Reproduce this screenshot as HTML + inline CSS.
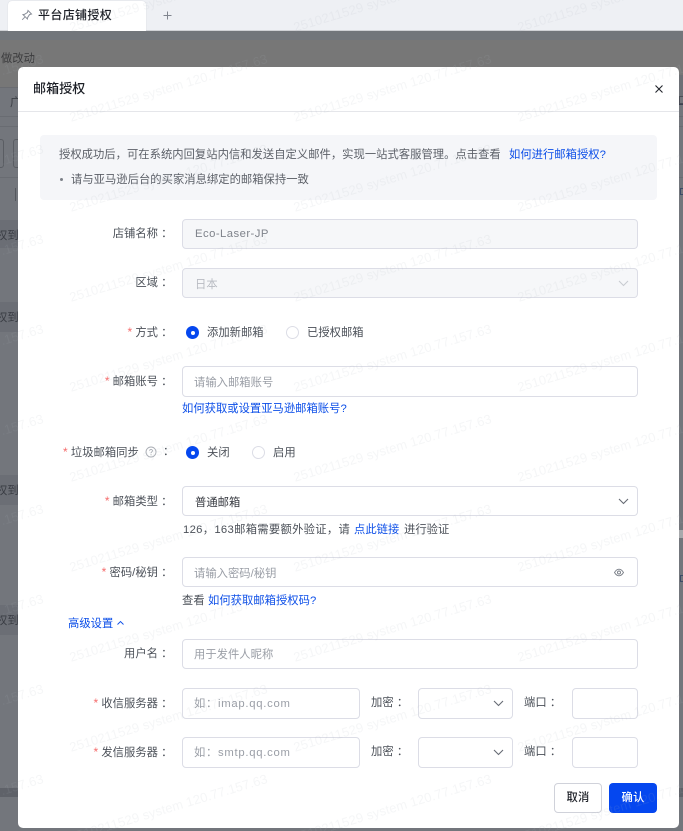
<!DOCTYPE html>
<html lang="zh" style="width:683px;height:831px;overflow:hidden"><head><meta charset="utf-8"><title>邮箱授权</title>
<style>
*{box-sizing:border-box}
html,body{margin:0;padding:0}
body{width:683px;height:831px;overflow:hidden;position:relative;background:#73767c;font-family:"Liberation Sans","Noto Sans CJK SC",sans-serif;font-size:11.3px;letter-spacing:.03px;color:#4b5058}
.a{position:absolute;white-space:nowrap;line-height:16px}
.r{position:absolute;white-space:nowrap;line-height:16px;text-align:right}
.i{position:absolute;border:1px solid #dcdde6;border-radius:4px;background:#fff;height:30px}
.d{background:#f6f7f9}
.ph{color:#9a9ea6}
.b{color:#0d4fe8}
.s{color:#f56c6c;font-size:12px}
.rd{position:absolute;width:13px;height:13px;border-radius:50%;background:#0547ef}
.rd:after{content:"";position:absolute;left:4.5px;top:4.5px;width:4px;height:4px;border-radius:50%;background:#fff}
.ro{position:absolute;width:13px;height:13px;border-radius:50%;background:#fff;border:1px solid #dcdde6}
svg{position:absolute;overflow:visible}
.bd{position:absolute;left:0;width:18px;height:30px;background:#6b6e75}
.wm{position:absolute;white-space:nowrap;font-size:13px;letter-spacing:.1px;line-height:16px;color:rgba(175,180,190,.12);transform-origin:0 50%;transform:rotate(-16.7deg);pointer-events:none;z-index:50}
#wmwrap{position:absolute;left:0;top:0;width:683px;height:831px;overflow:hidden;z-index:50}
</style></head><body>

<!-- top bar -->
<div style="position:absolute;left:0;top:0;width:683px;height:31px;background:#eef0f4;border-bottom:1px solid #d0d2d6"></div>
<div style="position:absolute;left:8px;top:1px;width:138px;height:30px;background:#fff;border-radius:4px 4px 0 0;box-shadow:0 0 1px #c8ccd2"></div>
<svg style="left:21px;top:9px" width="12" height="12" viewBox="0 0 12 12" fill="none" stroke="#8a8f99" stroke-width="1"><path d="M7 1.5 10.5 5 8.5 5.6 6.6 8.6 6.4 10 2 5.6 3.4 5.4 6.400 3.500Z"/><path d="M3.800 8.200 1.200 10.800"/></svg>
<div class="a" style="left:38px;top:7px;font-size:12px;letter-spacing:.35px;color:#1c1f26;font-weight:500">平台店铺授权</div>
<svg style="left:162px;top:10px" width="11" height="11" viewBox="0 0 11 11" stroke="#80858e" stroke-width="1"><path d="M5.500 1.500v8M1.500 5.500h8"/></svg>

<!-- background page under mask -->
<div style="position:absolute;left:0;top:31px;width:683px;height:9px;background:#72767b"></div>
<div style="position:absolute;left:0;top:40px;width:683px;height:47px;background:#777"></div>
<div style="position:absolute;left:0;top:87px;width:683px;height:1px;background:#6a6c71"></div>
<div style="position:absolute;left:0;top:116px;width:683px;height:1px;background:#696c72"></div>
<div style="position:absolute;left:0;top:126px;width:683px;height:1px;background:#696c72"></div>
<div style="position:absolute;left:0;top:177px;width:683px;height:1px;background:#696c72"></div>
<div class="a" style="left:1px;top:51px;color:#3c3c3e">做改动</div>
<div class="a" style="left:10px;top:95px;color:#3c3f45">广</div>
<div style="position:absolute;left:-8px;top:139px;width:12px;height:29px;border:1px solid #5a5d63;border-radius:3px"></div>
<div style="position:absolute;left:13px;top:139px;width:12px;height:29px;border:1px solid #5a5d63;border-radius:3px"></div>
<div style="position:absolute;left:15px;top:188px;width:1px;height:13px;background:#55585e"></div>
<div class="bd" style="top:220px;height:28px"></div>
<div class="bd" style="top:302px"></div>
<div class="bd" style="top:475px"></div>
<div class="bd" style="top:605px"></div>
<div style="position:absolute;left:0;top:788px;width:683px;height:9px;background:#5f6269"></div>
<div style="position:absolute;left:0;top:228px;width:18px;height:16px;overflow:hidden"><div class="a" style="left:-4px;top:0;color:#3a3d44">权到期</div></div>
<div style="position:absolute;left:0;top:310px;width:18px;height:16px;overflow:hidden"><div class="a" style="left:-4px;top:0;color:#3a3d44">权到期</div></div>
<div style="position:absolute;left:0;top:483px;width:18px;height:16px;overflow:hidden"><div class="a" style="left:-4px;top:0;color:#3a3d44">权到期</div></div>
<div style="position:absolute;left:0;top:613px;width:18px;height:16px;overflow:hidden"><div class="a" style="left:-4px;top:0;color:#3a3d44">权到期</div></div>
<div style="position:absolute;left:679px;top:75px;width:4px;height:22px;background:#6d7076"></div>
<div style="position:absolute;left:679px;top:104px;width:4px;height:1px;background:#3c4050"></div>
<div style="position:absolute;left:679px;top:96px;width:4px;height:8px;border:1px solid #4a4d55;border-right:0"></div>
<div style="position:absolute;left:680px;top:188px;width:3px;height:7px;border:1px solid #3b4a66;border-right:0"></div>
<div style="position:absolute;left:679px;top:530px;width:4px;height:8px;background:#a7a9ac"></div>
<div style="position:absolute;left:680px;top:575px;width:3px;height:7px;border:1px solid #3b4a66;border-right:0"></div>

<!-- modal -->
<div style="position:absolute;left:18px;top:67px;width:661px;height:761px;background:#fff;border-radius:5px"></div>
<div style="position:absolute;left:18px;top:111px;width:661px;height:1px;background:#e5e6ea"></div>
<div class="a" style="left:33px;top:81px;font-size:13px;letter-spacing:.1px;color:#1c1f26;font-weight:500">邮箱授权</div>
<svg style="left:655px;top:85px" width="8" height="8" viewBox="0 0 8 8" stroke="#23262d" stroke-width="1.1"><path d="M.5.5l7 7M7.500.5l-7 7"/></svg>

<!-- info -->
<div style="position:absolute;left:40px;top:135px;width:617px;height:65px;background:#f5f6f9;border-radius:4px"></div>
<div class="a" style="left:59px;top:147px;color:#5c6068">授权成功后，可在系统内回复站内信和发送自定义邮件，实现一站式客服管理。点击查看</div>
<div class="a b" style="left:509px;top:147px">如何进行邮箱授权?</div>
<div style="position:absolute;left:60px;top:178px;width:3px;height:3px;border-radius:50%;background:#7c8088"></div>
<div class="a" style="left:71px;top:172px;color:#5c6068">请与亚马逊后台的买家消息绑定的邮箱保持一致</div>

<!-- 店铺名称 -->
<div class="r" style="right:510.500px;top:226px">店铺名称 ：</div>
<div class="i d" style="left:182px;top:219px;width:456px"></div>
<div class="a" style="left:195px;top:226px;color:#7f838b;letter-spacing:.45px">Eco-Laser-JP</div>

<!-- 区域 -->
<div class="r" style="right:510.500px;top:275px">区域 ：</div>
<div class="i d" style="left:182px;top:268px;width:456px"></div>
<div class="a" style="left:195px;top:277px;color:#b9bcc3">日本</div>
<svg style="left:618px;top:280px" width="11" height="7" viewBox="0 0 11 7" fill="none" stroke="#c9cbd1" stroke-width="1.1"><path d="M1 1l4.500 4.500L10 1"/></svg>

<!-- 方式 -->
<div class="r" style="right:510.500px;top:324px"><span class="s">*</span> 方式 ：</div>
<div class="rd" style="left:186px;top:326px"></div>
<div class="a" style="left:207px;top:325px">添加新邮箱</div>
<div class="ro" style="left:286px;top:326px"></div>
<div class="a" style="left:307px;top:325px">已授权邮箱</div>

<!-- 邮箱账号 -->
<div class="r" style="right:510.500px;top:373px"><span class="s">*</span> 邮箱账号 ：</div>
<div class="i" style="left:182px;top:366px;width:456px;height:31px"></div>
<div class="a ph" style="left:194px;top:375px">请输入邮箱账号</div>
<div class="a b" style="left:182px;top:401px;letter-spacing:.02px">如何获取或设置亚马逊邮箱账号?</div>

<!-- 垃圾邮箱同步 -->
<div class="a" style="left:63px;top:444px"><span class="s">*</span> 垃圾邮箱同步</div>
<svg style="left:145px;top:446px" width="12" height="12" viewBox="0 0 12 12" fill="none" stroke="#a9adb4" stroke-width=".9"><circle cx="6" cy="6" r="5"/><path d="M4.600 4.800c0-1.800 2.900-1.800 2.900 0 0 1.100-1.500 1-1.500 2.300"/><path d="M6 8.300v.9"/></svg>
<div class="a" style="left:163px;top:444px">：</div>
<div class="rd" style="left:186px;top:446px"></div>
<div class="a" style="left:207px;top:445px">关闭</div>
<div class="ro" style="left:252px;top:446px"></div>
<div class="a" style="left:273px;top:445px">启用</div>

<!-- 邮箱类型 -->
<div class="r" style="right:510.500px;top:493px"><span class="s">*</span> 邮箱类型 ：</div>
<div class="i" style="left:182px;top:486px;width:456px"></div>
<div class="a" style="left:195px;top:495px;color:#34373e">普通邮箱</div>
<svg style="left:618px;top:498px" width="11" height="7" viewBox="0 0 11 7" fill="none" stroke="#666b74" stroke-width="1.1"><path d="M1 1l4.500 4.500L10 1"/></svg>
<div class="a" style="left:183px;top:522px;letter-spacing:.3px">126，163邮箱需要额外验证，请</div>
<div class="a b" style="left:354px;top:522px">点此链接</div>
<div class="a" style="left:404px;top:522px">进行验证</div>

<!-- 密码 -->
<div class="r" style="right:510.500px;top:564px"><span class="s">*</span> 密码/秘钥 ：</div>
<div class="i" style="left:182px;top:557px;width:456px"></div>
<div class="a ph" style="left:194px;top:566px">请输入密码/秘钥</div>
<svg style="left:614px;top:568px" width="10" height="9" viewBox="0 0 10 9" fill="none" stroke="#777c85" stroke-width=".9"><path d="M.5 4.500C2 2 3.500 1.200 5 1.200S8 2 9.500 4.500C8 7 6.500 7.800 5 7.800S2 7 .5 4.500Z"/><circle cx="5" cy="4.500" r="1.500"/></svg>
<div class="a" style="left:182px;top:593px">查看</div>
<div class="a b" style="left:208px;top:593px">如何获取邮箱授权码?</div>

<!-- 高级设置 -->
<div class="a b" style="left:68px;top:616px">高级设置</div>
<svg style="left:117px;top:621px" width="7" height="4" viewBox="0 0 7 4" fill="none" stroke="#0d4fe8" stroke-width=".9"><path d="M.5 3.500l3-3 3 3"/></svg>

<!-- 用户名 -->
<div class="r" style="right:510.500px;top:646px">用户名 ：</div>
<div class="i" style="left:182px;top:639px;width:456px"></div>
<div class="a ph" style="left:194px;top:647px">用于发件人昵称</div>

<!-- 收信 -->
<div class="r" style="right:510.500px;top:695px"><span class="s">*</span> 收信服务器 ：</div>
<div class="i" style="left:182px;top:688px;width:178px;height:31px"></div>
<div class="a ph" style="left:194px;top:696px;letter-spacing:.72px">如：imap.qq.com</div>
<div class="a" style="left:371px;top:695px">加密 ：</div>
<div class="i" style="left:418px;top:688px;width:95px;height:31px"></div>
<svg style="left:493px;top:700px" width="11" height="7" viewBox="0 0 11 7" fill="none" stroke="#666b74" stroke-width="1.1"><path d="M1 1l4.500 4.500L10 1"/></svg>
<div class="a" style="left:524px;top:695px">端口 ：</div>
<div class="i" style="left:572px;top:688px;width:66px;height:31px"></div>

<!-- 发信 -->
<div class="r" style="right:510.500px;top:744px"><span class="s">*</span> 发信服务器 ：</div>
<div class="i" style="left:182px;top:737px;width:178px;height:31px"></div>
<div class="a ph" style="left:194px;top:745px;letter-spacing:.72px">如：smtp.qq.com</div>
<div class="a" style="left:371px;top:744px">加密 ：</div>
<div class="i" style="left:418px;top:737px;width:95px;height:31px"></div>
<svg style="left:493px;top:749px" width="11" height="7" viewBox="0 0 11 7" fill="none" stroke="#666b74" stroke-width="1.1"><path d="M1 1l4.500 4.500L10 1"/></svg>
<div class="a" style="left:524px;top:744px">端口 ：</div>
<div class="i" style="left:572px;top:737px;width:66px;height:31px"></div>

<!-- buttons -->
<div class="a" style="left:554px;top:783px;width:48px;height:30px;border:1px solid #d0d2da;border-radius:4px;background:#fff;text-align:center;line-height:29px;color:#1c1f26;font-weight:500;letter-spacing:.2px">取消</div>
<div class="a" style="left:609px;top:783px;width:48px;height:30px;border-radius:4px;background:#0547ef;text-align:center;line-height:31px;color:#fff;font-weight:500;letter-spacing:.2px">确认</div>

<!-- watermarks -->
<div id="wmwrap">
<div class="wm" style="left:70px;top:20px">2510211529 system 120.77.157.63</div><div class="wm" style="left:294px;top:20px">2510211529 system 120.77.157.63</div><div class="wm" style="left:518px;top:20px">2510211529 system 120.77.157.63</div>
<div class="wm" style="left:-154px;top:110px">2510211529 system 120.77.157.63</div><div class="wm" style="left:70px;top:110px">2510211529 system 120.77.157.63</div><div class="wm" style="left:294px;top:110px">2510211529 system 120.77.157.63</div><div class="wm" style="left:518px;top:110px">2510211529 system 120.77.157.63</div>
<div class="wm" style="left:-154px;top:200px">2510211529 system 120.77.157.63</div><div class="wm" style="left:70px;top:200px">2510211529 system 120.77.157.63</div><div class="wm" style="left:294px;top:200px">2510211529 system 120.77.157.63</div><div class="wm" style="left:518px;top:200px">2510211529 system 120.77.157.63</div>
<div class="wm" style="left:-154px;top:290px">2510211529 system 120.77.157.63</div><div class="wm" style="left:70px;top:290px">2510211529 system 120.77.157.63</div><div class="wm" style="left:294px;top:290px">2510211529 system 120.77.157.63</div><div class="wm" style="left:518px;top:290px">2510211529 system 120.77.157.63</div>
<div class="wm" style="left:-154px;top:380px">2510211529 system 120.77.157.63</div><div class="wm" style="left:70px;top:380px">2510211529 system 120.77.157.63</div><div class="wm" style="left:294px;top:380px">2510211529 system 120.77.157.63</div><div class="wm" style="left:518px;top:380px">2510211529 system 120.77.157.63</div>
<div class="wm" style="left:-154px;top:470px">2510211529 system 120.77.157.63</div><div class="wm" style="left:70px;top:470px">2510211529 system 120.77.157.63</div><div class="wm" style="left:294px;top:470px">2510211529 system 120.77.157.63</div><div class="wm" style="left:518px;top:470px">2510211529 system 120.77.157.63</div>
<div class="wm" style="left:-154px;top:560px">2510211529 system 120.77.157.63</div><div class="wm" style="left:70px;top:560px">2510211529 system 120.77.157.63</div><div class="wm" style="left:294px;top:560px">2510211529 system 120.77.157.63</div><div class="wm" style="left:518px;top:560px">2510211529 system 120.77.157.63</div>
<div class="wm" style="left:-154px;top:650px">2510211529 system 120.77.157.63</div><div class="wm" style="left:70px;top:650px">2510211529 system 120.77.157.63</div><div class="wm" style="left:294px;top:650px">2510211529 system 120.77.157.63</div><div class="wm" style="left:518px;top:650px">2510211529 system 120.77.157.63</div>
<div class="wm" style="left:-154px;top:740px">2510211529 system 120.77.157.63</div><div class="wm" style="left:70px;top:740px">2510211529 system 120.77.157.63</div><div class="wm" style="left:294px;top:740px">2510211529 system 120.77.157.63</div><div class="wm" style="left:518px;top:740px">2510211529 system 120.77.157.63</div>
<div class="wm" style="left:-154px;top:830px">2510211529 system 120.77.157.63</div><div class="wm" style="left:70px;top:830px">2510211529 system 120.77.157.63</div><div class="wm" style="left:294px;top:830px">2510211529 system 120.77.157.63</div><div class="wm" style="left:518px;top:830px">2510211529 system 120.77.157.63</div>
</div>
</body></html>
